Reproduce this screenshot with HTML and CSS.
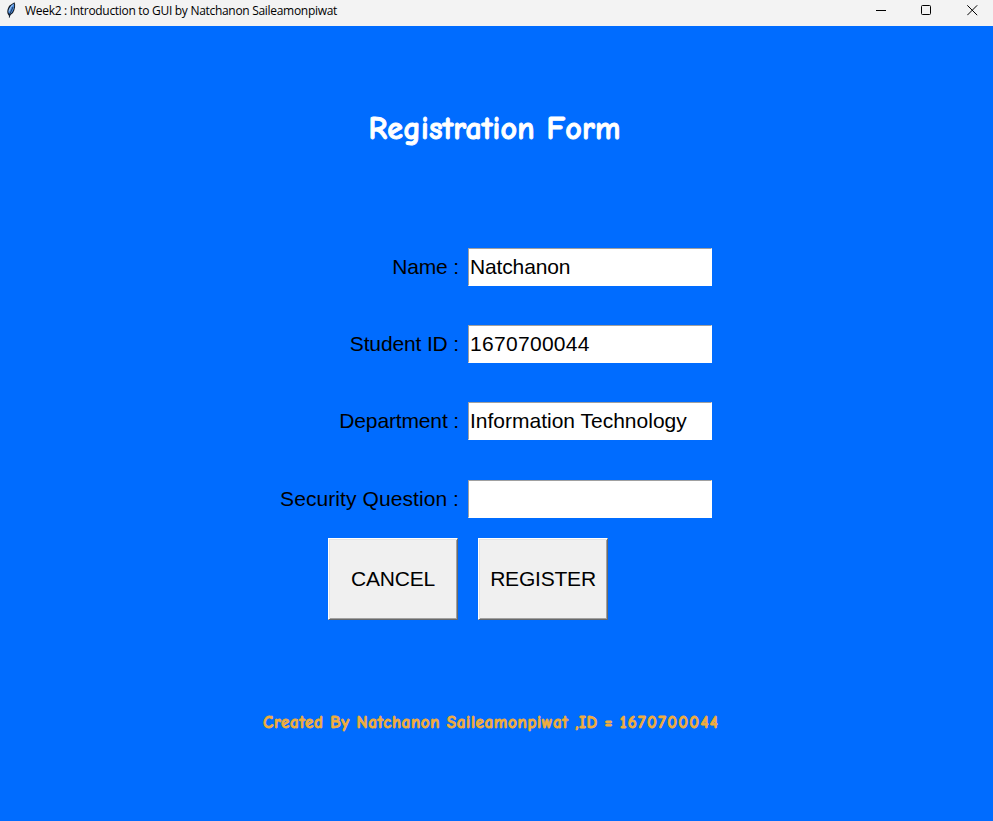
FILE: index.html
```html
<!DOCTYPE html>
<html lang="en">
<head>
<meta charset="utf-8">
<title>Week2 : Introduction to GUI by Natchanon Saileamonpiwat</title>
<link rel="stylesheet" href="styles.css">
</head>
<body>
<header class="titlebar">
  <svg class="feather" width="12" height="17" viewBox="0 0 12 17">
    <path d="M4.300 16 3.800 13.500C1.500 11 2 7 4.500 3.500L9.500.3C10.800 3 10.200 7.500 8 11L5.500 13Z" fill="#111923"/>
    <path d="M3.500 11C3 8 4.200 6 6 3.800L9 1.500C9.700 4.500 8.900 7.500 7 10.500L5 12Z" fill="#4b8bdc"/>
    <path d="M4 9.500 5.500 5.500 8 2.500" fill="none" stroke="#a9cdf5"/>
    <path d="M4.300 15.500 5 11.500 8 5" fill="none" stroke="#17253a" stroke-width=".8"/>
  </svg>
  <span class="caption">Week2 : Introduction to GUI by Natchanon Saileamonpiwat</span>
  <div class="controls">
    <svg width="11" height="11" viewBox="0 0 11 11"><path d="M1 5.500H11"/></svg>
    <svg width="11" height="11" viewBox="0 0 11 11"><rect x=".5" y=".5" width="9" height="9" rx="1"/></svg>
    <svg width="11" height="11" viewBox="0 0 11 11"><path d="M.3.3 10.200 10.200M10.200.3.3 10.200"/></svg>
  </div>
</header>
<main class="content">
  <h1 class="heading">Registration Form</h1>
  <form class="form">
    <label class="label tight" for="name">Name :</label><input class="entry tight" id="name" value="Natchanon">
    <label class="label tight" for="sid">Student ID :</label><input class="entry number" id="sid" value="1670700044">
    <label class="label tight" for="dept">Department :</label><input class="entry" id="dept" value="Information Technology">
    <label class="label" for="question">Security Question :</label><input class="entry" id="question">
  </form>
  <div class="actions">
    <button class="button">CANCEL</button>
    <button class="button">REGISTER</button>
  </div>
  <p class="credit">Created By Natchanon Saileamonpiwat ,ID = <span class="digits">1670700044</span></p>
</main>
</body>
</html>
```
FILE: styles.css
```css
* { box-sizing: border-box; }
body { margin: 0; height: 821px; overflow: hidden; background: #006cff; font-family: "Liberation Sans", Arial, sans-serif; color: #000; }
.titlebar { display: flex; height: 26px; background: #f3f3f3; padding-left: 5px; }
.feather { margin-top: 2px; flex: none; }
.caption { margin-left: 8px; font: 12px/22px "Open Sans", sans-serif; letter-spacing: -0.3px; white-space: nowrap; }
.controls { display: flex; gap: 35px; margin: 5px 15px 0 auto; }
.controls svg { fill: none; stroke: #000; stroke-width: 1; }
.heading { margin: 82px 0 0 368.500px; font: bold 32px/42px "Comic Sans MS", "Comic Neue", "Noto Sans", sans-serif; letter-spacing: 0.18px; -webkit-text-stroke: 0.9px #fff; color: #fff; white-space: nowrap; }
.form { display: grid; grid-template-columns: 459px 244px; column-gap: 9px; grid-template-rows: 38px 38px 39px 38px; row-gap: 39px; margin-top: 98px; }
.label { font-size: 21px; line-height: 38px; letter-spacing: 0.08px; text-align: right; white-space: nowrap; }
.entry { width: 244px; height: 38px; margin: 0; padding: 0 0 0 1px; border: 1px solid #fff; border-top-color: #a0a0a0; border-left-color: #a0a0a0; border-radius: 0; background: #fff; font: 21px "Liberation Sans", Arial, sans-serif; color: #000; outline: 0; }
.tight { letter-spacing: -0.14px; }
.number { letter-spacing: 0.3px; }
.actions { display: flex; gap: 20px; margin: 20px 0 0 328px; }
.button { width: 130px; height: 82px; padding: 0 0 1px; border: 1px solid; border-color: #fff #696969 #696969 #fff; border-radius: 0; box-shadow: inset 1px 1px #e3e3e3, inset -1px -1px #a0a0a0; background: #f0f0f0; font: 21px "Liberation Sans", Arial, sans-serif; letter-spacing: -0.2px; color: #000; }
.credit { margin: 91px 0 0 263px; font: bold 17px/24px "Comic Sans MS", "Comic Neue", "Noto Sans", sans-serif; letter-spacing: 0.660px; -webkit-text-stroke: 0.8px #f0ad3c; color: #f0ad3c; white-space: nowrap; }
.digits { letter-spacing: 1.350px; }
```
